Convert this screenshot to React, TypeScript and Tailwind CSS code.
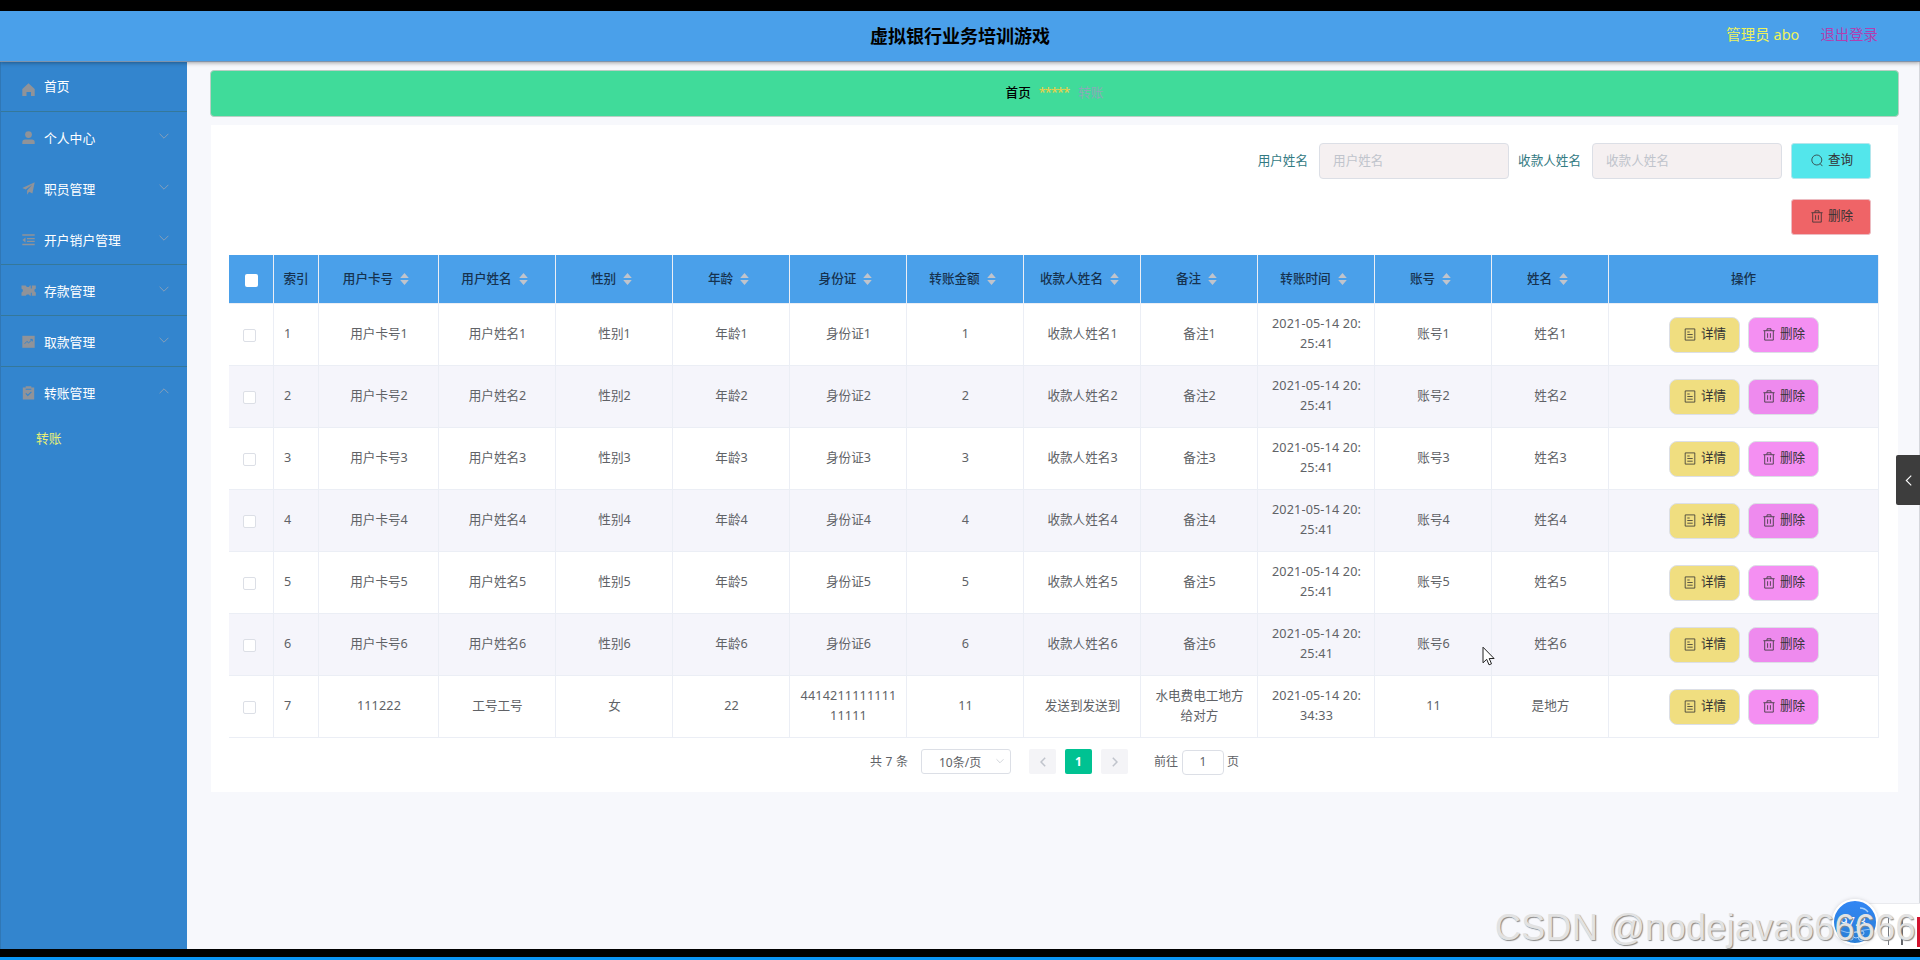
import type { ReactNode } from "react";
import { clsx } from "clsx";

type MenuItem = {
  label: string;
  icon: ReactNode;
  line: boolean;
  open?: boolean;
};

const menu: MenuItem[] = [
  {
    label: "个人中心",
    line: false,
    icon: (
      <>
        <circle cx="6.5" cy="3.6" r="3.4" />
        <path d="M.3 11.4Q.3 8.6 3.2 8.6h6.6q2.9 0 2.9 2.8V13H.3z" />
      </>
    ),
  },
  {
    label: "职员管理",
    line: false,
    icon: <path d="M12.7.3.3 5.9l3.4 1.7 6.4-4.9-5 5.7v4.3l2-2.9 3.3 1.6z" />,
  },
  {
    label: "开户销户管理",
    line: true,
    icon: <path d="M.3 1.2h12.4v1.5H.3zM5 5h7.7v1.3H5zM5 7.8h7.7V9H5zM.3 10.8h12.4v1.5H.3zM3.5 4.6v4.8L.4 7z" />,
  },
  {
    label: "存款管理",
    line: true,
    icon: (
      <path d="M-.5 1.5h4.2l1.2 1.4h2l1-1.4h.9v3h1v-3h4v3.3q-1.4.3-1.4 1.8t1.4 1.8v3.4h-4v-3h-1v3h-.9l-1-1.4h-2l-1.2 1.4H-.5V8.4q1.4-.3 1.4-1.8T-.5 4.8z" />
    ),
  },
  {
    label: "取款管理",
    line: true,
    icon: (
      <>
        <path d="M.3.8h12.4v12H.3z" />
        <path d="m2.6 8.8 2.3-2.4 1.8 1.4 3.3-3.2M8.3 4.4h2v2" fill="none" stroke="#3385ce" strokeWidth="1" />
      </>
    ),
  },
  {
    label: "转账管理",
    line: false,
    open: true,
    icon: (
      <>
        <path d="M.8 1.6h2.9V.2h5.6v1.4h2.9v11.8H.8z" />
        <path d="M3.7 3.2h5.6M3.8 7.4l2 2 3.6-3.6" fill="none" stroke="#3385ce" strokeWidth="1.1" />
      </>
    ),
  },
];

const columns = [
  "用户卡号",
  "用户姓名",
  "性别",
  "年龄",
  "身份证",
  "转账金额",
  "收款人姓名",
  "备注",
  "转账时间",
  "账号",
  "姓名",
];

const rows: string[][] = [
  ...[1, 2, 3, 4, 5, 6].map((n) => [
    `用户卡号${n}`,
    `用户姓名${n}`,
    `性别${n}`,
    `年龄${n}`,
    `身份证${n}`,
    `${n}`,
    `收款人姓名${n}`,
    `备注${n}`,
    "2021-05-14 20:\n25:41",
    `账号${n}`,
    `姓名${n}`,
  ]),
  [
    "111222",
    "工号工号",
    "女",
    "22",
    "4414211111111\n11111",
    "11",
    "发送到发送到",
    "水电费电工地方\n给对方",
    "2021-05-14 20:\n34:33",
    "11",
    "是地方",
  ],
];

function Chevron({ className, up }: { className?: string; up?: boolean }) {
  return (
    <svg viewBox="0 0 10 6" className={className} fill="none" stroke="currentColor" strokeWidth="0.9">
      <path d={up ? "M.6 5.2 5 .8l4.4 4.4" : "M.6.8 5 5.2 9.4.8"} />
    </svg>
  );
}

function TrashIcon() {
  return (
    <svg viewBox="0 0 12 13" className="h-[13px] w-3" fill="none" stroke="currentColor" strokeWidth="0.8">
      <path d="M.4 2.7h11.2M4 2.5V.8h4v1.7M1.7 2.9v9.2h8.6V2.9M4.6 5.2v4.6M7.4 5.2v4.6" />
    </svg>
  );
}

function DocIcon() {
  return (
    <svg viewBox="0 0 12 13" className="h-[13px] w-3" fill="none" stroke="currentColor" strokeWidth="0.8">
      <path d="M1.2.9h9.6v11.2H1.2zM3.3 4h2.4M3.3 6.5h5.4M3.3 9.2h5.4" />
    </svg>
  );
}

function SearchIcon() {
  return (
    <svg viewBox="0 0 12 13" className="h-[13px] w-3" fill="none" stroke="currentColor" strokeWidth="0.8">
      <circle cx="5.8" cy="6" r="5" />
      <path d="m9.2 9.7 2.2 2.4" />
    </svg>
  );
}

function SortCaret() {
  return (
    <svg viewBox="0 0 9 14" className="h-3.5 w-[9px]" fill="#c0c4cc">
      <path d="M4.5 1 8.8 6H.2zM4.5 13 .2 8h8.6z" />
    </svg>
  );
}

function Header() {
  return (
    <header className="relative z-10 flex h-[51px] shrink-0 items-start border-b border-[#7f93ab] bg-[#4aa0ea] shadow-[0_1px_4px_rgba(0,0,0,0.35)]">
      <div className="w-[360px]" />
      <h1 className="flex-1 pt-[11px] text-center text-[18px] leading-7 font-bold text-black">虚拟银行业务培训游戏</h1>
      <div className="flex w-[360px] justify-end gap-[21px] pt-3 pr-[42px] text-[14.4px] leading-6">
        <span className="text-[#eef25a] tracking-[0.1px]">管理员 abo</span>
        <span className="text-[#b23fb0]">退出登录</span>
      </div>
    </header>
  );
}

function Sidebar() {
  return (
    <aside className="w-[187px] shrink-0 border-l border-[#3077b5] bg-[#3385ce] text-[12.8px] text-white">
      <div className="flex h-[50px] items-start border-b border-[#35789a] pt-[14px] pl-[21px]">
        <svg viewBox="0 0 13 13" className="mt-[7px] h-[13px] w-[13px]" fill="#909399">
          <path d="M6.5.3 12.7 6v7H9V9H4.5v4H.3V6z" />
        </svg>
        <span className="ml-[9px] leading-5">首页</span>
      </div>
      {menu.map((item) => (
        <div
          key={item.label}
          className={clsx(
            "flex h-[51px] items-center border-b pt-px pr-[18px] pl-[21px]",
            item.line ? "border-[#35789a]" : "border-transparent",
          )}
        >
          <svg viewBox="0 0 13 13" className="h-[13px] w-[13px] overflow-visible" fill="#909399">
            {item.icon}
          </svg>
          <span className="ml-[9px] flex-1 leading-5">{item.label}</span>
          <Chevron up={item.open} className="-mt-[3px] h-1.5 w-2.5 text-[#8ea3b8]" />
        </div>
      ))}
      <div className="pt-[10px] pl-[35px] leading-5 text-[#e6ee78]">转账</div>
    </aside>
  );
}

function SearchField({ label }: { label: string }) {
  return (
    <label className="flex items-center gap-[11px] text-[12.6px] text-[#337a83]">
      {label}
      <input
        className="h-9 w-[190px] rounded border border-[#dcdfe6] bg-[#f5f0f1] px-[13px] pb-0.5 text-[12.6px] placeholder:text-[#c0c4cc]"
        placeholder={label}
      />
    </label>
  );
}

function DataTable() {
  return (
    <table className="w-[1650px] table-fixed border-separate border-spacing-0 text-[12.6px] leading-5 text-[#606266]">
      <colgroup>
        <col className="w-[45px]" />
        <col className="w-[45px]" />
        <col className="w-[120px]" />
        {columns.slice(1).map((c) => (
          <col key={c} className="w-[117px]" />
        ))}
        <col className="w-[270px]" />
      </colgroup>
      <thead>
        <tr className="h-[49px] bg-[#4aa0ea] text-[#16324f]">
          <th className="border-r border-b border-[#ebeef5] p-0">
            <div className="mx-auto mt-[3px] h-[13px] w-[13px] rounded-xs bg-white" />
          </th>
          <th className="border-r border-b border-[#ebeef5] p-0 font-medium">索引</th>
          {columns.map((c) => (
            <th key={c} className="border-r border-b border-[#ebeef5] p-0 pr-[5px] font-medium">
              <div className="flex items-center justify-center gap-[7px]">
                <span className="pb-px">{c}</span>
                <SortCaret />
              </div>
            </th>
          ))}
          <th className="border-r border-b border-[#ebeef5] p-0 font-medium">操作</th>
        </tr>
      </thead>
      <tbody>
        {rows.map((row, i) => (
          <tr key={i} className={clsx("h-[62px]", i % 2 ? "bg-[#f5f5fb]" : "bg-white")}>
            <td className="border-r border-b border-[#ebeef5] p-0 pr-1">
              <div className="mx-auto mt-0.5 h-[13px] w-[13px] rounded-xs border border-[#dcdfe6] bg-white" />
            </td>
            <td className="border-r border-b border-[#ebeef5] p-0 pb-px pl-[10px]">{i + 1}</td>
            {row.map((cell, j) => (
              <td
                key={j}
                className={clsx(
                  "border-r border-b border-[#ebeef5] p-0 pb-px pl-px text-center whitespace-pre-line",
                  /^\d/.test(cell) && "tracking-[0.17px]",
                )}
              >
                {cell}
              </td>
            ))}
            <td className="border-r border-b border-[#ebeef5] p-0">
              <div className="flex justify-center gap-2 text-[#333]">
                <button className="flex h-9 w-[71px] items-center justify-center gap-[5px] rounded-lg border border-[#dcdfe6] bg-[#f0de80] pb-px pl-0.5">
                  <DocIcon />
                  详情
                </button>
                <button
                  className={clsx(
                    "flex h-9 w-[71px] items-center justify-center gap-[5px] rounded-lg border border-[#dcdfe6] pb-px pl-0.5",
                    i % 2 ? "bg-[#ee8aee]" : "bg-[#f48ff2]",
                  )}
                >
                  <TrashIcon />
                  删除
                </button>
              </div>
            </td>
          </tr>
        ))}
      </tbody>
    </table>
  );
}

function Pagination() {
  return (
    <div className="mt-[11px] flex h-[26px] items-start pl-[641px] text-[12px] leading-[25px] text-[#606266]">
      <span className="w-[51px] tracking-[0.2px]">共 7 条</span>
      <div className="flex h-[25px] w-[90px] items-center justify-between rounded-[3px] border border-[#dcdfe6] pt-0.5 pr-1.5 pl-[17px]">
        10条/页
        <Chevron className="-mt-1 h-1.5 w-2 text-[#c0c4cc]" />
      </div>
      <div className="ml-[18px] flex gap-[9px]">
        <span className="flex h-[25px] w-[27px] items-center justify-center rounded-xs bg-[#f4f4f7] text-[#c0c4cc]">
          <svg viewBox="0 0 6 10" className="h-2.5 w-1.5" fill="none" stroke="currentColor" strokeWidth="1.5">
            <path d="M5.2.8 1 5l4.2 4.2" />
          </svg>
        </span>
        <span className="h-[25px] w-[27px] rounded-xs bg-[#00c292] text-center font-bold text-white">1</span>
        <span className="flex h-[25px] w-[27px] items-center justify-center rounded-xs bg-[#f4f4f7] text-[#c0c4cc]">
          <svg viewBox="0 0 6 10" className="h-2.5 w-1.5" fill="none" stroke="currentColor" strokeWidth="1.5">
            <path d="M.8.8 5 5 .8 9.2" />
          </svg>
        </span>
      </div>
      <span className="ml-[26px]">前往</span>
      <span className="mt-px ml-1 h-[25px] w-[42px] rounded border border-[#dcdfe6] text-center leading-[22px]">1</span>
      <span className="ml-[3px]">页</span>
    </div>
  );
}

export default function App() {
  return (
    <div className="relative flex h-[960px] w-[1920px] flex-col overflow-hidden bg-black pt-[11px] font-['Noto_Sans','Noto_Sans_CJK_SC',sans-serif]">
      <Header />
      <div className="flex h-[887px] shrink-0 bg-[#f7f8fc]">
        <Sidebar />
        <main className="flex-1 border-r border-[#d5d7dc] pt-2 pl-[23px]">
          <div className="flex h-[47px] w-[1689px] items-center justify-center rounded border border-[#b9cfc4] bg-[#40db9a] text-[12.6px]">
            <span className="font-medium text-black">首页</span>
            <span className="mr-[9px] ml-2 font-medium text-[#e8cf4a] tracking-[-0.8px]">*****</span>
            <span className="text-[#8aaab8]">转账</span>
          </div>
          <section className="mt-2 ml-px h-[667px] w-[1687px] bg-white px-[18px] pt-[18px]">
            <div className="flex justify-end gap-[9px] pr-[9px]">
              <SearchField label="用户姓名" />
              <SearchField label="收款人姓名" />
              <button className="flex h-9 w-20 items-center justify-center gap-[5px] rounded-[3px] border border-[#b4e6ec] bg-[#53e6eb] pb-px pl-0.5 text-[12.6px] text-[#333]">
                <SearchIcon />
                查询
              </button>
            </div>
            <div className="mt-5 mb-5 flex justify-end pr-[9px]">
              <button className="flex h-9 w-20 items-center justify-center gap-[5px] rounded-[3px] border border-[#ecbcc2] bg-[#ef6467] pb-0.5 pl-0.5 text-[12.6px] text-[#333]">
                <TrashIcon />
                删除
              </button>
            </div>
            <DataTable />
            <Pagination />
          </section>
        </main>
      </div>
      <div className="mt-2 h-[3px] shrink-0 bg-[#0a95f5]" />

      {/* collapsed side drawer handle */}
      <div className="absolute top-[455px] right-0 z-10 flex h-[50px] w-6 items-center justify-center rounded-l-xs bg-[#3d3d3d]">
        <svg viewBox="0 0 6 10" className="h-[11px] w-[7px]" fill="none" stroke="#fff" strokeWidth="1">
          <path d="M5.5.5 1 5l4.5 4.5" />
        </svg>
      </div>

      {/* mouse pointer */}
      <svg viewBox="0 0 13 20" className="absolute top-[646px] left-[1481.5px] z-10 h-5 w-[13px]" fill="#fff" stroke="#222">
        <path d="M1 1.2v15.6l3.7-3.5 2.3 5.5 2.5-1-2.3-5.3h4.9z" />
      </svg>

      {/* floating widget in the corner */}
      <div className="absolute top-[903px] right-0 h-[46px] w-[66px] border-t border-[#e9eaee] bg-white">
        <div className="absolute top-[13px] left-[34px] h-7 w-px bg-[#77797d]" />
        <div className="absolute top-[13px] left-[47px] h-7 w-0.5 bg-[#66686c]" />
        <div className="absolute top-[13px] right-0 h-[30px] w-[3px] bg-[#d3142f]" />
      </div>
      <div className="absolute top-[899px] left-[1832px] flex h-[46px] w-[46px] items-center justify-center rounded-full border-2 border-white bg-linear-to-b from-[#3186f4] to-[#2a7fd6] pr-1 text-[13px] text-white shadow-[0_0_4px_rgba(0,0,0,0.15)]">
        97.3
        <svg viewBox="0 0 42 42" className="absolute inset-0" fill="none" stroke="#a9d2fb">
          <path d="M26 7q5 0 8 4" strokeWidth="1.4" />
          <circle cx="22" cy="34" r="3" />
          <circle cx="28" cy="32" r="2" />
          <circle cx="27" cy="37" r="2.5" />
          <circle cx="17" cy="37" r="2" />
          <path d="M5 29q8 4 16 2t16-3" strokeWidth="0.8" />
        </svg>
      </div>

      <div className="absolute top-[901px] left-[1495px] z-20 font-['Liberation_Sans',sans-serif] text-[36px] leading-[54px] tracking-[0.3px] whitespace-nowrap text-[#e2e2e2] [text-shadow:1px_1px_1px_#888]">
        CSDN @nodejava666666
      </div>
    </div>
  );
}
